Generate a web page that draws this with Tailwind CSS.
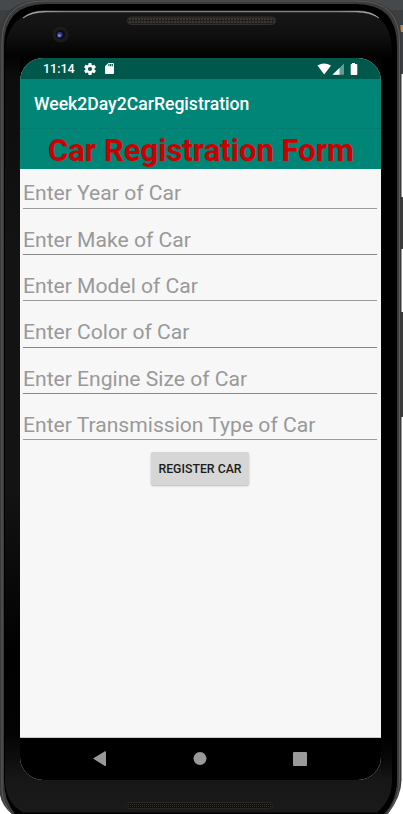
<!DOCTYPE html>
<html lang="en">
<head>
<meta charset="utf-8">
<meta name="viewport" content="width=device-width">
<title>Week2Day2CarRegistration</title>
<script src="https://cdn.jsdelivr.net/npm/@tailwindcss/browser@4"></script>
</head>
<body class="w-[403px] h-[814px] overflow-hidden relative bg-white font-[Roboto,sans-serif]">
  <!-- Device frame -->
  <svg class="absolute inset-0" width="403" height="814" viewBox="0 0 403 814">
    <defs>
      <linearGradient id="body" x1="0" y1="0" x2="0" y2="1">
        <stop offset="0" stop-color="#171717"/><stop offset=".03" stop-color="#101010"/><stop offset=".055" stop-color="#020202"/><stop offset=".08" stop-color="#0c0c0c"/><stop offset=".3" stop-color="#131313"/><stop offset=".6" stop-color="#131313"/><stop offset=".8" stop-color="#010101"/><stop offset=".9" stop-color="#030303"/><stop offset=".96" stop-color="#171717"/><stop offset="1" stop-color="#1a1a1a"/>
      </linearGradient>
      <linearGradient id="right" x1="0" y1="0" x2="0" y2="1">
        <stop offset="0" stop-color="#000"/><stop offset=".93" stop-color="#000"/><stop offset="1" stop-color="#000" stop-opacity="0"/>
      </linearGradient>
      <linearGradient id="shine" x1="0" y1="0" x2="1" y2="0">
        <stop offset="0" stop-color="#bbb"/><stop offset=".12" stop-color="#808080"/><stop offset=".88" stop-color="#808080"/><stop offset="1" stop-color="#bbb"/>
      </linearGradient>
      <pattern id="mesh" width="3" height="3" patternUnits="userSpaceOnUse">
        <rect width="3" height="3" fill="#22201c"/><rect width="2" height="2" fill="#3d3932"/>
      </pattern>
      <pattern id="meshLow" width="2" height="2" patternUnits="userSpaceOnUse">
        <rect width="2" height="2" fill="#11110f"/><rect width="1" height="1" fill="#35332a"/>
      </pattern>
    </defs>
    <rect width="403" height="10" fill="#46494b"/>
    <rect y="10" width="403" height="64" fill="#3c3f41"/>
    <rect x="400.500" y="25" width="3" height="7" fill="#b98a52"/>
    <rect x="401" y="197" width="2" height="52" fill="#3a3a3a"/>
    <rect x="401" y="312" width="2" height="105" fill="#3a3a3a"/>
    <path d="M0 795V24H2Q8 0 44 0H358Q401.500 0 401.500 42V780Q401.500 796 388 814H12Q2 806 0 795Z" fill="#3a3a3a"/>
    <path d="M12 814Q2 803 2 790V42Q2 1 44 1H358Q399.500 1 399.500 42V780Q399.500 798 387 814" fill="none" stroke="#5c5c5c"/>
    <path d="M4 780V46Q4 4 46 4H356Q397 4 397 46V780Q397 800 384 814H15Q4 800 4 780Z" fill="#000"/>
    <path d="M5 780V50Q8 11 46 11H356Q390 11 392 50V780Q392 800 377 812.500H23Q5 802 5 780Z" fill="url(#body)"/>
    <rect x="381" y="58" width="15" height="722" fill="url(#right)"/>
    <path d="M23 18Q31 11 44 11H358Q371 11 379 18Q370 12 356 12H46Q32 12 23 18Z" fill="url(#shine)" stroke="url(#shine)" stroke-width=".5"/>
    <rect x="127.500" y="17" width="148" height="7.500" rx="3.700" fill="url(#mesh)" stroke="#303030"/>
    <rect x="126.500" y="802.500" width="146" height="6" rx="3" fill="url(#meshLow)" stroke="#262626"/>
    <circle cx="60.500" cy="34.500" r="8" fill="#1b1a1c"/>
    <circle cx="60.500" cy="34.500" r="4.700" fill="#0c0c14"/>
    <circle cx="59.800" cy="34.800" r="2.800" fill="#303a80"/>
    <circle cx="59.300" cy="35.500" r="1.500" fill="#7585dd"/>
    <rect x="20" y="58" width="20" height="20" fill="#000"/>
  </svg>

  <!-- Screen -->
  <div class="relative ml-[20px] mt-[58px] w-[361px] h-[722px] rounded-[23px] overflow-hidden flex flex-col bg-[#f7f7f7]">
    <div class="h-[21px] shrink-0 bg-[#00574b] flex items-center justify-between px-[22px] text-white">
      <div class="flex items-center">
        <span class="w-[42px] pl-px text-[12.500px] leading-[21px] font-medium whitespace-nowrap">11:14</span>
        <svg width="12" height="12" viewBox="2 2 20 20" fill="#fff"><path d="M19.430 12.980c.04-.32.07-.64.07-.98s-.03-.66-.07-.98l2.110-1.650c.19-.15.24-.42.12-.64l-2-3.460c-.12-.22-.39-.3-.61-.22l-2.490 1c-.52-.4-1.080-.73-1.690-.98l-.38-2.650A.49.490 0 0 0 14 2h-4c-.25 0-.46.180-.49.420l-.38 2.650c-.61.250-1.170.590-1.690.980l-2.490-1c-.23-.09-.49 0-.61.220l-2 3.460c-.13.220-.07.490.12.640l2.110 1.650c-.04.320-.07.650-.07.980s.03.660.07.980l-2.110 1.650c-.19.150-.24.420-.12.640l2 3.460c.12.220.39.300.61.220l2.490-1c.52.400 1.080.730 1.690.980l.38 2.650c.03.240.24.420.49.420h4c.25 0 .46-.18.490-.42l.38-2.650c.61-.25 1.170-.59 1.690-.98l2.490 1c.23.090.49 0 .61-.22l2-3.460c.12-.22.070-.49-.12-.64l-2.110-1.650zM12 15.500A3.500 3.500 0 1 1 12 8.500a3.500 3.500 0 0 1 0 7z"/></svg>
        <svg class="ml-[9px]" width="9" height="11" viewBox="4 2 16 20" preserveAspectRatio="none" fill="#fff"><path d="M18 2h-8L4.020 8 4 20c0 1.100.9 2 2 2h12c1.100 0 2-.9 2-2V4c0-1.100-.9-2-2-2zm-6 6h-2V4h2v4zm3 0h-2V4h2v4zm3 0h-2V4h2v4z"/></svg>
      </div>
      <svg width="42" height="12" viewBox="0 0 42 12" fill="#fff">
        <path d="M.5 2.500Q7-1.500 14 2.500L7.200 11.500Z"/>
        <path d="M27 .5V11.800H15.500Z" fill-opacity=".4"/><path d="M22.500 5V11.800H15.500Z"/>
        <path d="M35 0h3v1h1.500q.8 0 .8.800v9.400q0 .8-.8.800h-5q-.8 0-.8-.8V1.800q0-.8.8-.8H35Z"/>
      </svg>
    </div>
    <header class="h-[49px] shrink-0 bg-[#008577] pl-[14px] pt-[2px] flex items-center text-white text-[17.600px] font-medium whitespace-nowrap">
      <span>Week2Day2CarRegistration</span>
    </header>
    <h1 class="h-[41px] shrink-0 bg-[#008577] border-t border-[#007d70] flex items-center justify-center text-[#cc0000] text-[31px] leading-[40px] pt-[3px] pl-px font-bold whitespace-nowrap">Car Registration Form</h1>
    <main class="grow flex flex-col pl-[3px] pr-[4px] text-[#999] text-[21.100px] whitespace-nowrap">
      <div class="h-[39.500px] border-b border-[#9b9b9b] leading-[48px]">Enter Year of Car</div>
      <div class="h-[46.400px] border-b border-[#858585] leading-[62px]">Enter Make of Car</div>
      <div class="h-[46.400px] border-b border-[#9b9b9b] leading-[62px]">Enter Model of Car</div>
      <div class="h-[46.400px] border-b border-[#858585] leading-[62px]">Enter Color of Car</div>
      <div class="h-[46.400px] border-b border-[#858585] leading-[62px]">Enter Engine Size of Car</div>
      <div class="h-[46.400px] border-b border-[#9b9b9b] leading-[62px]">Enter Transmission Type of Car</div>
      <button class="mt-[12px] self-center w-[98px] h-[33px] rounded-[2px] bg-[#d5d6d5] shadow-[0_1px_2px_rgba(0,0,0,0.25)] text-[#1c1c1c] text-[12.300px] font-medium">REGISTER CAR</button>
    </main>
    <nav class="h-[43px] shrink-0 bg-black border-t border-[#c8c8c8]">
      <svg width="361" height="42" viewBox="0 0 361 42" fill="#999"><path d="M73 20.500 84.500 13.500Q86 13 86 14V27.500Q86 28.500 84.500 27.800Z"/><circle cx="180" cy="20.500" r="6.500"/><rect x="273" y="14" width="14" height="14" rx="1"/></svg>
    </nav>
  </div>
</body>
</html>
